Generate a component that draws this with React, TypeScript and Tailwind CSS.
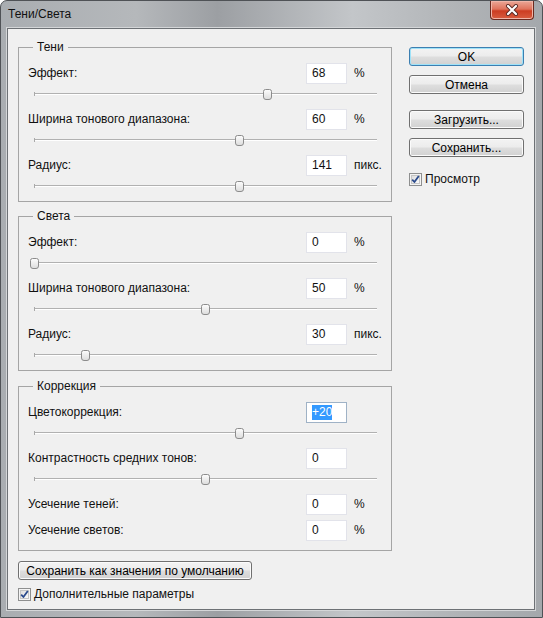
import React from "react";

const FONT = "font-['Liberation_Sans',Arial,sans-serif]";

function Thumb() {
  return (
    <svg width="9" height="11" viewBox="0 0 9 11" className="block">
      <defs>
        <linearGradient id="thumbFill" x1="0" y1="0" x2="0" y2="1">
          <stop offset="0" stopColor="#fdfdfd" />
          <stop offset="1" stopColor="#dcdcdc" />
        </linearGradient>
      </defs>
      <path
        d="M2.5 0.5h4a2 2 0 0 1 2 2v5.5a2.5 2.5 0 0 1-2.5 2.5h-3a2.5 2.5 0 0 1-2.5-2.5v-5.5a2 2 0 0 1 2-2z"
        fill="url(#thumbFill)"
        stroke="#8c8c8c"
      />
    </svg>
  );
}

function Slider({ value }: { value: number }) {
  return (
    <div className="h-[26px] pt-[10px] pl-[15px] pr-[14px]">
      <div className="relative h-[2px] border-t border-[#b1b1b1] bg-white">
        <div className="absolute left-0 top-[-2px] h-[4px] w-px bg-[#a9a9a9]" />
        <div
          className="absolute top-[-5px]"
          style={{ left: `${value * 342 - 4}px` }}
        >
          <Thumb />
        </div>
      </div>
    </div>
  );
}

function Field({
  label,
  value,
  unit,
  focused,
}: {
  label: string;
  value: string;
  unit?: string;
  focused?: boolean;
}) {
  return (
    <div className="flex h-[20px] items-center pl-[9px]">
      <span className="w-[278px] leading-[20px]">{label}</span>
      <div
        className={`flex h-[21px] w-[41px] items-center border bg-white pl-[5px] ${
          focused ? "border-[#9fb2c6]" : "border-[#e2e3ea]"
        }`}
      >
        {focused ? (
          <span className="bg-[#3399ff] leading-[15px] text-white">{value}</span>
        ) : (
          <span>{value}</span>
        )}
      </div>
      {unit && <span className="ml-[7px]">{unit}</span>}
    </div>
  );
}

function Group({
  title,
  className,
  children,
}: {
  title: string;
  className?: string;
  children: React.ReactNode;
}) {
  return (
    <fieldset
      className={`w-[374px] min-w-0 border border-[#a5a5a5] ${className ?? ""}`}
    >
      <legend className="ml-[14px] px-[4px] leading-[15px]">{title}</legend>
      {children}
    </fieldset>
  );
}

function WinButton({
  children,
  primary,
  className,
}: {
  children: React.ReactNode;
  primary?: boolean;
  className?: string;
}) {
  return (
    <button
      className={`flex items-center justify-center rounded-[3px] border bg-[linear-gradient(#f3f3f3_0%,#ececec_48%,#dedede_52%,#d1d1d1_100%)] text-[12px] leading-none text-black ${
        primary
          ? "border-[#3c7fb1] shadow-[inset_0_0_0_1px_#9fe2f8]"
          : "border-[#707070] shadow-[inset_0_0_0_1px_#fbfbfb]"
      } ${className ?? ""}`}
    >
      {children}
    </button>
  );
}

function CheckBox({ label }: { label: string }) {
  return (
    <div className="flex items-center">
      <svg width="13" height="13" viewBox="0 0 13 13" className="block">
        <defs>
          <linearGradient id="cbFill" x1="0" y1="0" x2="1" y2="1">
            <stop offset="0" stopColor="#dcdcdc" />
            <stop offset="1" stopColor="#fbfbfb" />
          </linearGradient>
        </defs>
        <rect x="0.5" y="0.5" width="12" height="12" fill="#f4f4f4" stroke="#8e8f8f" />
        <rect x="2.5" y="2.5" width="8" height="8" fill="url(#cbFill)" stroke="#c5c5c5" />
        <path
          d="M3.2 6.6l2.2 2.4 4.4-6"
          fill="none"
          stroke="#2a4a8c"
          strokeWidth="1.8"
          strokeLinejoin="round"
        />
      </svg>
      <span className="ml-[3px] leading-[15px]">{label}</span>
    </div>
  );
}

function CloseButton() {
  return (
    <div className="flex h-[19px] w-[44px] items-center justify-center rounded-b-[4px] border border-t-0 border-[#6b2a1f] bg-[linear-gradient(#eba797_0%,#df735c_45%,#cc3d22_55%,#d85d40_100%)] shadow-[inset_0_0_0_1px_#f0b5a8]">
      <svg width="14" height="12" viewBox="0 0 14 12">
        <path d="M3 2l8 8M11 2l-8 8" stroke="#5a2a24" strokeWidth="4" strokeLinecap="round" />
        <path d="M3 2l8 8M11 2l-8 8" stroke="#ffffff" strokeWidth="2.2" strokeLinecap="round" />
      </svg>
    </div>
  );
}

export default function App() {
  return (
    <div className={`${FONT} h-[618px] w-[543px] text-[12px] text-[#111]`}>
      <div className="h-[618px] w-[543px] rounded-t-[7px] border border-[#4f5256] bg-[linear-gradient(90deg,#a9adb1_0%,#b5b8bb_25%,#9c9fa3_40%,#c3c6c9_65%,#b0b3b6_85%,#a4a8ac_100%)]">
        <div className="flex h-[27px] items-start justify-between">
          <span className="ml-[7px] mt-[6px] leading-[15px] text-[#111]">Тени/Света</span>
          <div className="mr-[8px]">
            <CloseButton />
          </div>
        </div>
        <div className="ml-[6px] flex h-[582px] w-[528px] border border-[#6d7175] bg-[#f0f0f0] shadow-[0_0_0_1px_#d4d6d8]">
          <div className="flex flex-col pl-[10px] pt-[11px]">
            <Group title="Тени">
              <div className="mt-[8px]" />
              <Field label="Эффект:" value="68" unit="%" />
              <Slider value={0.68} />
              <Field label="Ширина тонового диапазона:" value="60" unit="%" />
              <Slider value={0.6} />
              <Field label="Радиус:" value="141" unit="пикс." />
              <Slider value={0.6} />
            </Group>
            <Group title="Света" className="mt-[7px]">
              <div className="mt-[8px]" />
              <Field label="Эффект:" value="0" unit="%" />
              <Slider value={0} />
              <Field label="Ширина тонового диапазона:" value="50" unit="%" />
              <Slider value={0.5} />
              <Field label="Радиус:" value="30" unit="пикс." />
              <Slider value={0.15} />
            </Group>
            <Group title="Коррекция" className="mt-[8px] pb-[10px]">
              <div className="mt-[8px]" />
              <Field label="Цветокоррекция:" value="+20" focused />
              <Slider value={0.6} />
              <Field label="Контрастность средних тонов:" value="0" />
              <Slider value={0.5} />
              <Field label="Усечение теней:" value="0" unit="%" />
              <div className="h-[6px]" />
              <Field label="Усечение светов:" value="0" unit="%" />
            </Group>
            <WinButton className="mt-[10px] h-[19px] w-[234px]">
              Сохранить как значения по умолчанию
            </WinButton>
            <div className="mt-[7px]">
              <CheckBox label="Дополнительные параметры" />
            </div>
          </div>
          <div className="ml-[17px] flex w-[115px] flex-col pt-[18px]">
            <WinButton primary className="h-[19px] w-[115px]">
              OK
            </WinButton>
            <WinButton className="mt-[9px] h-[19px] w-[115px]">Отмена</WinButton>
            <WinButton className="mt-[16px] h-[19px] w-[115px]">Загрузить...</WinButton>
            <WinButton className="mt-[9px] h-[19px] w-[115px]">Сохранить...</WinButton>
            <div className="mt-[15px]">
              <CheckBox label="Просмотр" />
            </div>
          </div>
        </div>
      </div>
    </div>
  );
}
